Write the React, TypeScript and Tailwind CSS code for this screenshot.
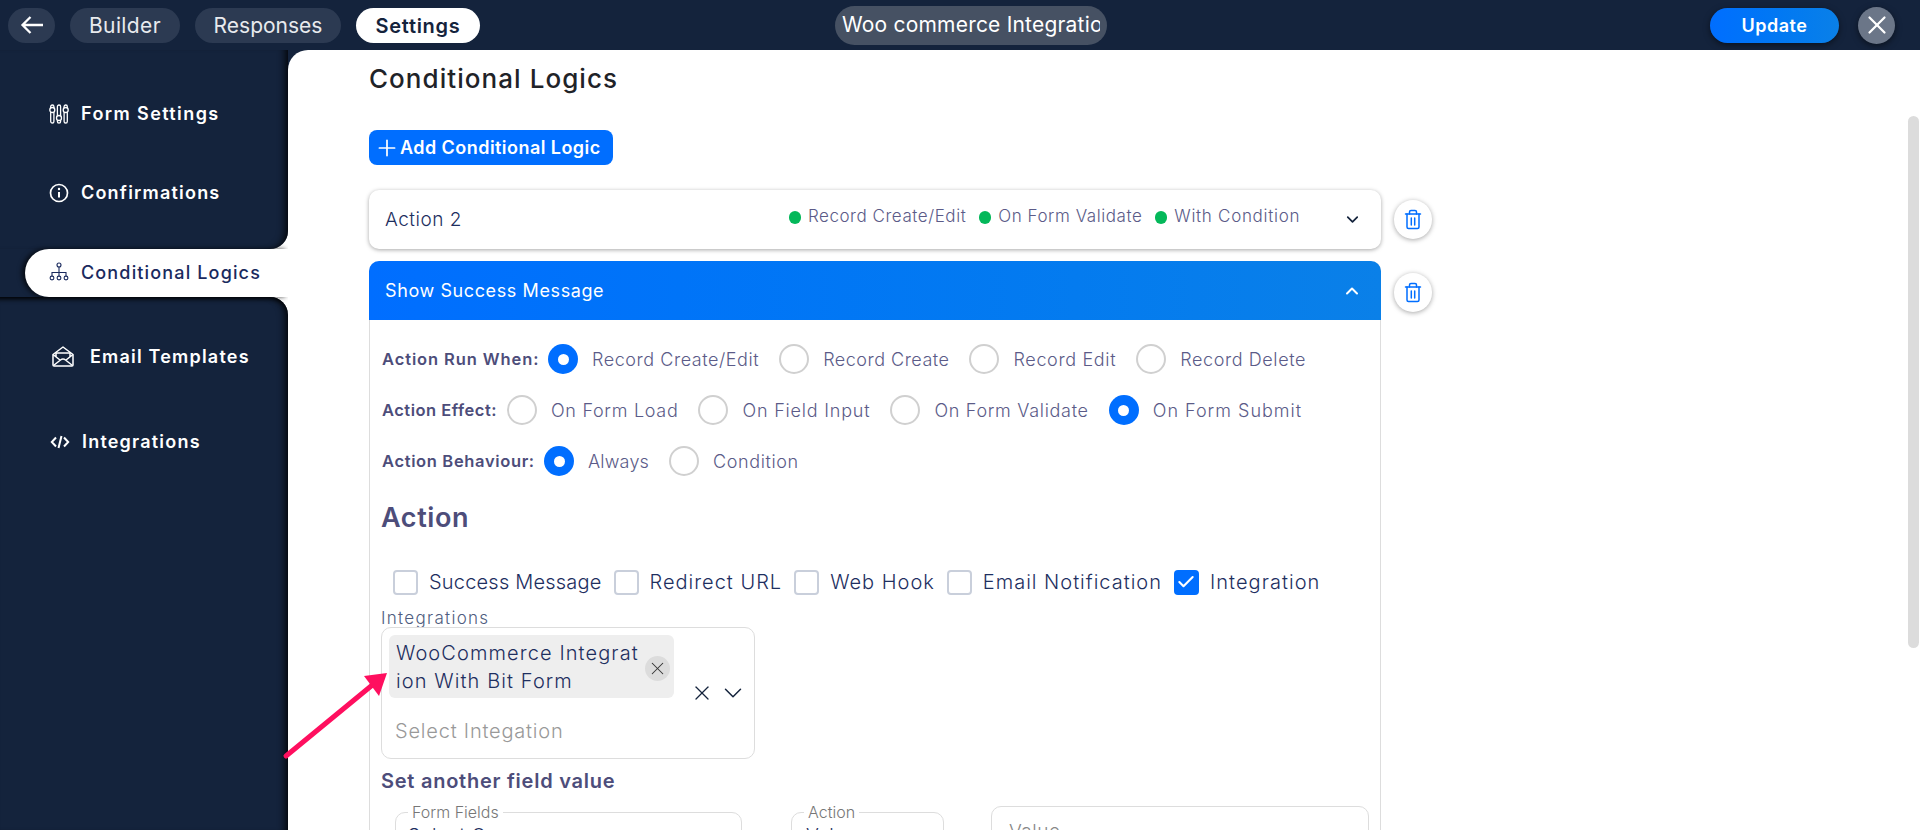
import { Check, ChevronDown, ChevronUp, Plus, X } from "lucide-react";

const navy = "bg-[#14233c]";

const FormSettingsIcon = () => (
  <svg width="20" height="20" viewBox="0 0 20 20" fill="none" stroke="currentColor" strokeWidth="1.3">
    <rect x="1.7" y="1" width="3.2" height="18" rx="1.6" />
    <rect x="8.4" y="1" width="3.2" height="18" rx="1.6" />
    <rect x="15.1" y="1" width="3.2" height="18" rx="1.6" />
    <circle cx="3.3" cy="6" r="2.5" fill="#14233c" />
    <circle cx="10" cy="14" r="2.5" fill="#14233c" />
    <circle cx="16.7" cy="6" r="2.5" fill="#14233c" />
  </svg>
);

const InfoIcon = () => (
  <svg width="20" height="20" viewBox="0 0 20 20" fill="none" stroke="currentColor" strokeWidth="1.7">
    <circle cx="10" cy="10" r="8.5" />
    <path d="M10 9v5.5" strokeWidth="2" />
    <circle cx="10" cy="6" r="1.2" fill="currentColor" stroke="none" />
  </svg>
);

const TreeIcon = () => (
  <svg width="20" height="20" viewBox="0 0 20 20" fill="none" stroke="currentColor" strokeWidth="1.1">
    <circle cx="10" cy="3" r="2" />
    <path d="M10 5v9M3 14v-3.5h14V14" />
    <circle cx="3" cy="16" r="1.9" />
    <circle cx="10" cy="16" r="1.9" />
    <circle cx="17" cy="16" r="1.9" />
  </svg>
);

const MailIcon = () => (
  <svg width="22" height="21" viewBox="0 0 22 21" fill="none" stroke="currentColor" strokeWidth="1.5" strokeLinejoin="round">
    <path d="M1 8.5 11 1l10 7.5V19a1 1 0 0 1-1 1H2a1 1 0 0 1-1-1z" />
    <path d="M1 8.5 8 14M21 8.5 14 14M1.5 19.5 8.5 14a4 4 0 0 1 5 0l7 5.5M4 10.5V7h14v3.5" />
  </svg>
);

const CodeIcon = () => (
  <svg width="20" height="14" viewBox="0 0 20 14" fill="none" stroke="currentColor" strokeWidth="2">
    <path d="M6 2.5 1.8 7 6 11.5M14 2.5 18.2 7 14 11.5M11.5 1 8.5 13" />
  </svg>
);

const navItem = "flex items-center text-white text-[18px] font-semibold whitespace-nowrap";

const Pill = ({ label, className }: { label: string; className: string }) => (
  <div className={`h-[35px] rounded-full flex items-center justify-center pt-[1px] ${className}`}>{label}</div>
);

const Radio = ({ label, on, track = "tracking-[0.6px]" }: { label: string; on?: boolean; track?: string }) => (
  <div className="flex items-center gap-[14px]">
    {on ? (
      <span className="w-[30px] h-[30px] rounded-full bg-[#006eff] flex items-center justify-center">
        <span className="w-[11px] h-[11px] rounded-full bg-white" />
      </span>
    ) : (
      <span className="w-[30px] h-[30px] rounded-full border-2 border-[#d0d0d0]" />
    )}
    <span className={`text-[18px] text-[#5b5b88] font-light whitespace-nowrap ${track}`}>{label}</span>
  </div>
);

const Box = ({ label, on, track }: { label: string; on?: boolean; track: string }) => (
  <div className="flex items-center gap-[11px]">
    {on ? (
      <span className="w-[25px] h-[25px] rounded-[4px] bg-[#006eff] flex items-center justify-center">
        <Check size={20} strokeWidth={2.5} className="text-white" />
      </span>
    ) : (
      <span className="w-[25px] h-[25px] rounded-[4px] border-2 border-[#c9cfdb]" />
    )}
    <span className={`text-[20px] text-[#1e2f5f] font-light whitespace-nowrap ${track}`}>{label}</span>
  </div>
);

const TrashBtn = () => (
  <div className="w-[38px] h-[39px] rounded-full bg-white flex items-center justify-center shadow-[0_1px_5px_rgba(0,0,0,0.35)]">
    <svg width="20" height="21" viewBox="0 0 20 21" fill="none" stroke="#006eff" strokeWidth="1.5" strokeLinecap="round">
      <path d="M2.5 5h15" />
      <path d="M6.5 5V3a1.5 1.5 0 0 1 1.5-1.5h4A1.5 1.5 0 0 1 13.5 3v2" />
      <path d="M4 5v13a1.5 1.5 0 0 0 1.5 1.5h9A1.5 1.5 0 0 0 16 18V5" />
      <path d="M8.3 9v7M11.7 9v7" />
    </svg>
  </div>
);

const Tag = ({ label, track }: { label: string; track: string }) => (
  <div className="flex items-center gap-[7px]">
    <span className="w-[12px] h-[13px] rounded-full bg-[#04b85a]" />
    <span className={`text-[17px] text-[#5b5b88] font-light whitespace-nowrap ${track}`}>{label}</span>
  </div>
);

const label = "text-[16.5px] font-semibold text-[#4d4d7a] whitespace-nowrap";

export default function App() {
  return (
    <div className={`w-[1920px] h-[830px] overflow-hidden flex flex-col ${navy} font-['Inter',sans-serif]`}>
      <header className="h-[50px] shrink-0 flex items-center pl-[8px] pr-[25px]">
        <div className="w-[47px] h-[35px] rounded-full bg-[#2c3a52] flex items-center justify-center text-white">
          <svg width="24" height="18" viewBox="0 0 24 18" fill="none" stroke="currentColor" strokeWidth="2.3">
            <path d="M23 9H2.5M10.5 1 2.5 9l8 8" />
          </svg>
        </div>
        <Pill label="Builder" className="ml-[15px] w-[110px] bg-[#2c3a52] text-[#e8eaee] text-[21px] tracking-[0.4px]" />
        <Pill label="Responses" className="ml-[15px] w-[146px] bg-[#2c3a52] text-[#e8eaee] text-[21px]" />
        <Pill label="Settings" className="ml-[15px] w-[124px] bg-white text-[#14233c] font-semibold text-[20px] tracking-[0.7px]" />
        <div className="ml-[355px] w-[272px] h-[39px] rounded-full bg-[#465163] flex items-center px-[7px] overflow-hidden">
          <span className="text-white text-[21px] whitespace-nowrap overflow-hidden tracking-[0.2px]">Woo commerce Integration</span>
        </div>
        <div className="ml-auto w-[129px] h-[35px] rounded-full bg-gradient-to-r from-[#006eff] to-[#0a80e8] text-white font-semibold text-[18px] tracking-[0.5px] pt-[1px] flex items-center justify-center shadow-[0_2px_6px_rgba(0,0,0,0.5)]">
          Update
        </div>
        <div className="ml-[19px] w-[37px] h-[37px] rounded-full bg-[#6b7688] text-white flex items-center justify-center shadow-[0_2px_6px_rgba(0,0,0,0.5)]">
          <X size={30} strokeWidth={1.8} />
        </div>
      </header>

      <div className="flex-1 flex min-h-0 relative">
        <aside className="w-[288px] shrink-0 flex flex-col bg-white">
          <div className={`h-[199px] ${navy} rounded-br-[18px] flex flex-col shadow-[inset_-9px_0_8px_-7px_#000] pl-[49px]`}>
            <div className={`${navItem} mt-[50px] gap-[12px]`}>
              <FormSettingsIcon />
              <span className="tracking-[1.4px]">Form Settings</span>
            </div>
            <div className={`${navItem} mt-[52px] gap-[12px]`}>
              <InfoIcon />
              <span className="tracking-[1.2px]">Confirmations</span>
            </div>
          </div>
          <div className={`h-[48px] shrink-0 ${navy}`}>
            <div className="h-full ml-[25px] rounded-l-full bg-white flex items-center gap-[12px] pl-[24px] pb-[2px] text-[#1a2a5e] text-[18px] font-medium whitespace-nowrap shadow-[-3px_0_5px_rgba(0,0,0,0.7)]">
              <TreeIcon />
              <span className="tracking-[1.15px]">Conditional Logics</span>
            </div>
          </div>
          <div className={`flex-1 relative ${navy} rounded-tr-[18px] flex flex-col shadow-[inset_-9px_0_8px_-7px_#000,inset_0_7px_5px_-5px_#000]`}>
            <div className={`${navItem} mt-[46px] pl-[52px] gap-[16px]`}>
              <MailIcon />
              <span className="tracking-[1.2px]">Email Templates</span>
            </div>
            <div className={`${navItem} mt-[58px] pl-[50px] gap-[12px]`}>
              <CodeIcon />
              <span className="tracking-[1.2px]">Integrations</span>
            </div>
          </div>
        </aside>

        <main className="flex-1 min-w-0 pl-[81px] overflow-hidden relative z-20 bg-white rounded-tl-[20px]">
          <h1 className="mt-[13px] text-[26px] leading-[32px] font-medium text-[#1f2328] tracking-[1.05px]">Conditional Logics</h1>

          <div className="mt-[35px] w-[244px] h-[35px] rounded-[8px] bg-[#006eff] flex items-center pl-[5px] text-white text-[18px] font-semibold">
            <Plus size={26} strokeWidth={1.6} />
            <span className="tracking-[0.45px]">Add Conditional Logic</span>
          </div>

          <div className="mt-[25px] flex items-center w-[1063px]">
            <div className="w-[1012px] h-[59px] rounded-[10px] bg-white shadow-[0_1px_4px_rgba(0,0,0,0.35)] flex items-center pl-[16px]">
              <span className="mt-[1px] text-[19px] font-light text-[#1e2f5f] tracking-[0.5px]">Action 2</span>
              <div className="ml-[327px] -mt-[5px] flex items-center gap-[13px]">
                <Tag label="Record Create/Edit" track="tracking-[0.55px]" />
                <Tag label="On Form Validate" track="tracking-[0.55px]" />
                <Tag label="With Condition" track="tracking-[0.7px]" />
              </div>
              <ChevronDown size={19} strokeWidth={2.2} className="ml-auto mr-[19px] text-[#14233c]" />
            </div>
            <div className="ml-[13px]"><TrashBtn /></div>
          </div>

          <div className="mt-[12px] flex items-start w-[1063px]">
            <div className="w-[1012px] rounded-t-[10px] border-x border-[#dddddd] h-[580px]">
              <div className="-mx-px h-[59px] rounded-t-[10px] bg-gradient-to-r from-[#006eff] to-[#0a80e8] flex items-center justify-between pl-[16px] pr-[19px] text-white">
                <span className="text-[18px] tracking-[0.6px]">Show Success Message</span>
                <ChevronUp size={20} strokeWidth={2.4} />
              </div>

              <div className="pl-[12px] mt-[24px] flex items-center gap-[20px] h-[30px]">
                <span className={`${label} tracking-[0.9px] w-[156px] -mr-[10px]`}>Action Run When:</span>
                <Radio on label="Record Create/Edit" track="tracking-[0.55px]" />
                <Radio label="Record Create" track="tracking-[0.5px]" />
                <Radio label="Record Edit" track="tracking-[0.65px]" />
                <Radio label="Record Delete" />
              </div>
              <div className="pl-[12px] mt-[21px] flex items-center gap-[20px] h-[30px]">
                <span className={`${label} tracking-[0.5px] w-[115px] -mr-[10px]`}>Action Effect:</span>
                <Radio label="On Form Load" track="tracking-[0.7px]" />
                <Radio label="On Field Input" track="tracking-[0.8px]" />
                <Radio label="On Form Validate" track="tracking-[0.7px]" />
                <Radio on label="On Form Submit" track="tracking-[1px]" />
              </div>
              <div className="pl-[12px] mt-[21px] flex items-center gap-[20px] h-[30px]">
                <span className={`${label} tracking-[0.65px] w-[152px] -mr-[10px]`}>Action Behaviour:</span>
                <Radio on label="Always" track="tracking-[0.2px]" />
                <Radio label="Condition" />
              </div>

              <h2 className="pl-[11px] mt-[26px] text-[27px] leading-[32px] font-semibold text-[#4d4d7a] tracking-[0.6px]">Action</h2>

              <div className="pl-[23px] mt-[35px] flex items-center gap-[12px] h-[26px]">
                <Box label="Success Message" track="tracking-[0.2px]" />
                <Box label="Redirect URL" track="tracking-[1px]" />
                <Box label="Web Hook" track="tracking-[1px]" />
                <Box label="Email Notification" track="tracking-[1px]" />
                <Box on label="Integration" track="tracking-[1.05px]" />
              </div>

              <div className="pl-[11px] mt-[13px] text-[17px] leading-[20px] font-light text-[#4f5d80] tracking-[1.3px]">Integrations</div>
              <div className="ml-[11px] mt-[-1px] w-[374px] h-[132px] rounded-[10px] border border-[#dddddd] relative pl-[7px] pt-[7px]">
                <div className="w-[285px] h-[63px] rounded-[6px] bg-[#eeeeee] flex items-center justify-between pl-[7px] pr-[4px]">
                  <span className="w-[245px] text-[20px] leading-[28px] font-light text-[#1e2f5f] break-all tracking-[1.1px]">WooCommerce Integration With Bit Form</span>
                  <span className="w-[25px] h-[25px] rounded-full bg-[#dcdcdc] flex items-center justify-center text-[#333] -mb-[4px]">
                    <X size={21} strokeWidth={1.2} />
                  </span>
                </div>
                <X size={24} strokeWidth={1.3} className="absolute left-[308px] top-[53px] text-[#14233c]" />
                <ChevronDown size={30} strokeWidth={1.2} className="absolute left-[336px] top-[50px] text-[#14233c]" />
                <div className="pl-[6px] mt-[19px] text-[20px] leading-[28px] font-light text-[#999999] tracking-[0.8px]">Select Integation</div>
              </div>

              <div className="pl-[11px] mt-[10px] text-[20px] leading-[24px] font-semibold text-[#4d4d7a] tracking-[0.75px]">Set another field value</div>

              <div className="mt-[13px] flex items-start">
                <div className="ml-[25px] w-[347px] h-[60px] rounded-[10px] border border-[#dddddd] mt-[6px] relative pl-[12px]">
                  <span className="absolute left-[12px] -top-[11px] bg-white px-[4px] text-[16px] leading-[20px] text-[#777777] font-light">Form Fields</span>
                  <div className="pt-[9px] text-[19px] font-light text-[#1e2f5f] tracking-[0.5px]">Select One</div>
                </div>
                <div className="ml-[49px] w-[153px] h-[60px] rounded-[10px] border border-[#dddddd] mt-[6px] relative pl-[14px]">
                  <span className="absolute left-[12px] -top-[11px] bg-white px-[4px] text-[16px] leading-[20px] text-[#777777] font-light">Action</span>
                  <div className="pt-[9px] text-[19px] font-light text-[#1e2f5f] tracking-[0.5px]">Value</div>
                </div>
                <div className="ml-[47px] w-[378px] h-[60px] rounded-[10px] border border-[#dddddd] pl-[17px] pt-[11px] text-[19px] font-light text-[#888888] tracking-[0.5px]">Value</div>
              </div>
            </div>
            <div className="ml-[13px] mt-[12px]"><TrashBtn /></div>
          </div>

          <div className="absolute right-[1px] top-[66px] w-[11px] h-[532px] rounded-full bg-[#dcdcdc]" />
        </main>

        {/* annotation arrow */}
        <svg className="absolute z-30 left-[280px] top-[615px]" width="115" height="98" viewBox="0 0 115 98" fill="none">
          <path d="M6 91 96 17" stroke="#ff0f5f" strokeWidth="5" strokeLinecap="round" />
          <path d="M107 8 84 11 99 31z" fill="#ff0f5f" />
        </svg>
      </div>
    </div>
  );
}
